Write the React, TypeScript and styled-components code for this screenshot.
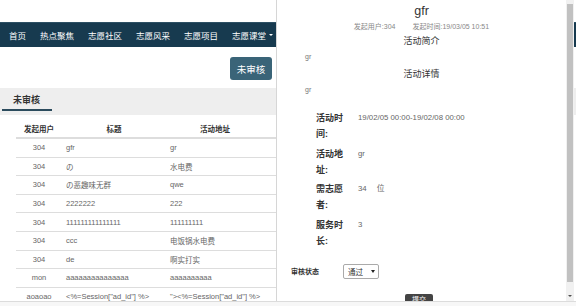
import React from 'react';
import styled, { createGlobalStyle } from 'styled-components';

const GlobalStyle = createGlobalStyle`
  html, body {
    margin: 0;
    padding: 0;
    background: #fff;
    overflow: hidden;
    font-family: 'Liberation Sans', 'Noto Sans CJK SC', sans-serif;
  }
`;

interface Row {
  user: string;
  title: string;
  address: string;
}

const rows: Row[] = [
  { user: '304', title: 'gfr', address: 'gr' },
  { user: '304', title: 'の', address: '水电费' },
  { user: '304', title: 'の恶趣味无群', address: 'qwe' },
  { user: '304', title: '2222222', address: '222' },
  { user: '304', title: '111111111111111', address: '111111111' },
  { user: '304', title: 'ccc', address: '电饭锅水电费' },
  { user: '304', title: 'de', address: '啊实打实' },
  { user: 'mon', title: 'aaaaaaaaaaaaaaa', address: 'aaaaaaaaaa' },
  { user: 'aoaoao', title: '<%=Session["ad_id"] %>', address: '"><%=Session["ad_id"] %>' },
];

const navItems = ['首页', '热点聚焦', '志愿社区', '志愿风采', '志愿项目'];

const details = [
  { label: '活动时间:', value: '19/02/05 00:00-19/02/08 00:00' },
  { label: '活动地址:', value: 'gr' },
  { label: '需志愿者:', value: '34', unit: '位' },
  { label: '服务时长:', value: '3' },
];

const App: React.FC = () => {
  return (
    <>
      <GlobalStyle />
      <Page>
        <NavBar>
          {navItems.map((item) => (
            <NavItem key={item}>{item}</NavItem>
          ))}
          <NavItem>
            志愿课堂 <Caret />
          </NavItem>
        </NavBar>

        <ActionRow>
          <PrimaryButton>未审核</PrimaryButton>
        </ActionRow>

        <TabBand>
          <Tab>未审核</Tab>
        </TabBand>

        <Table>
          <thead>
            <tr>
              <Th width={46}>发起用户</Th>
              <Th width={104}>标题</Th>
              <Th width={80}>活动地址</Th>
              <Th width={80}></Th>
            </tr>
          </thead>
          <tbody>
            {rows.map((row, i) => (
              <tr key={i}>
                <Td align="center">{row.user}</Td>
                <Td>{row.title}</Td>
                <Td>{row.address}</Td>
                <Td />
              </tr>
            ))}
          </tbody>
        </Table>
      </Page>

      <Modal>
        <ModalBody>
          <Title>gfr</Title>
          <Meta>
            <span>发起用户:304</span>
            <span>发起时间:19/03/05 10:51</span>
          </Meta>
          <SectionTitle>活动简介</SectionTitle>
          <SectionText>gr</SectionText>
          <SectionTitle>活动详情</SectionTitle>
          <SectionText>gr</SectionText>

          <DetailList>
            {details.map((d) => (
              <DetailRow key={d.label}>
                <DetailLabel>{d.label}</DetailLabel>
                <DetailValue>
                  {d.value}
                  {d.unit && <Unit>{d.unit}</Unit>}
                </DetailValue>
              </DetailRow>
            ))}
          </DetailList>

          <StatusRow>
            <StatusLabel>审核状态</StatusLabel>
            <Select>
              <span>通过</span>
              <SelectArrow />
            </Select>
          </StatusRow>

          <SubmitRow>
            <SubmitButton>提交</SubmitButton>
          </SubmitRow>
        </ModalBody>

        <ScrollTrack>
          <ScrollThumb />
          <ScrollArrow />
        </ScrollTrack>
      </Modal>

      <BottomEdge />
    </>
  );
};

const Page = styled.div`
  width: 576px;
  height: 306px;
  padding-top: 22px;
  box-sizing: border-box;
`;

const NavBar = styled.div`
  height: 25px;
  background-color: #173a4f;
  border-top: 1px solid #2d5064;
  box-sizing: border-box;
  display: flex;
  align-items: center;
  padding-left: 2px;
`;

const NavItem = styled.div`
  padding: 0 7px;
  color: #fff;
  font-size: 8.5px;
  display: flex;
  align-items: center;
  gap: 3px;
`;

const Caret = styled.span`
  width: 0;
  height: 0;
  border-left: 2px solid transparent;
  border-right: 2px solid transparent;
  border-top: 2px solid #fff;
`;

const ActionRow = styled.div`
  width: 276px;
  display: flex;
  justify-content: flex-end;
  padding: 10px 4px 0 0;
  box-sizing: border-box;
`;

const PrimaryButton = styled.div`
  width: 42px;
  height: 23px;
  border-radius: 3px;
  background-color: #3a6478;
  color: #fff;
  font-size: 9.5px;
  display: flex;
  align-items: center;
  justify-content: center;
`;

const TabBand = styled.div`
  margin-top: 8px;
  height: 27px;
  background-color: #eeeeee;
  padding-left: 2px;
`;

const Tab = styled.div`
  display: inline-block;
  width: 50px;
  box-sizing: border-box;
  padding: 6px 0 2px 11px;
  line-height: 13px;
  font-size: 9px;
  font-weight: bold;
  color: #333;
  border-bottom: 2px solid #2b4b5d;
`;

const Table = styled.table`
  margin: 5px 0 0 16px;
  border-collapse: collapse;
  table-layout: fixed;
  font-size: 7.5px;
`;

const Th = styled.th<{ width: number }>`
  box-sizing: border-box;
  width: ${(props) => props.width}px;
  height: 18px;
  padding: 0 4px;
  text-align: center;
  color: #333;
  font-weight: bold;
  border-bottom: 2px solid #ddd;
`;

const Td = styled.td<{ align?: 'left' | 'center' }>`
  height: 17.6px;
  padding: 0 4px;
  text-align: ${(props) => props.align || 'left'};
  color: #666;
  border-top: 1px solid #ddd;
  white-space: nowrap;
`;

const Modal = styled.div`
  position: fixed;
  left: 276px;
  top: 0;
  width: 298px;
  height: 302px;
  background-color: #fff;
  border-left: 1px solid #d6d6d6;
  box-sizing: border-box;
  display: flex;
  overflow: hidden;
`;

const ModalBody = styled.div`
  flex: 1;
  display: flex;
  flex-direction: column;
  color: #333;
`;

const Title = styled.div`
  margin-top: 3px;
  text-align: center;
  font-size: 12.5px;
  line-height: 16px;
`;

const Meta = styled.div`
  margin-top: 3px;
  display: flex;
  justify-content: center;
  gap: 17px;
  font-size: 7px;
  line-height: 9px;
  color: #888;
`;

const SectionTitle = styled.div`
  margin-top: 4px;
  text-align: center;
  font-size: 9px;
  line-height: 13px;
`;

const SectionText = styled.div`
  padding-left: 28px;
  margin-top: 2px;
  font-size: 7px;
  line-height: 14px;
  color: #777;
`;

const DetailList = styled.div`
  margin-top: 13px;
  padding-left: 39px;
  display: flex;
  flex-direction: column;
  gap: 3.5px;
`;

const DetailRow = styled.div`
  display: flex;
  align-items: flex-start;
`;

const DetailLabel = styled.div`
  width: 30px;
  font-size: 9px;
  line-height: 16px;
  font-weight: bold;
  color: #333;
`;

const DetailValue = styled.div`
  margin-left: 12px;
  font-size: 7.8px;
  line-height: 16px;
  color: #666;
`;

const Unit = styled.span`
  margin-left: 10px;
`;

const StatusRow = styled.div`
  margin-top: 15px;
  padding-left: 14px;
  display: flex;
  align-items: center;
`;

const StatusLabel = styled.div`
  width: 52px;
  font-size: 7px;
  font-weight: bold;
  color: #333;
`;

const Select = styled.div`
  width: 36px;
  height: 15px;
  box-sizing: border-box;
  border: 1px solid #aaa;
  border-radius: 2px;
  padding: 0 3px 0 4px;
  display: flex;
  align-items: center;
  justify-content: space-between;
  font-size: 7.5px;
  color: #333;
`;

const SelectArrow = styled.span`
  width: 0;
  height: 0;
  border-left: 2px solid transparent;
  border-right: 2px solid transparent;
  border-top: 3px solid #222;
`;

const SubmitRow = styled.div`
  margin-top: 15px;
  display: flex;
  padding-left: 128px;
`;

const SubmitButton = styled.div`
  width: 28px;
  height: 14px;
  background-color: #444;
  border-radius: 2px 2px 0 0;
  color: #fff;
  font-size: 7px;
  text-align: center;
  line-height: 11px;
`;

const ScrollTrack = styled.div`
  width: 8px;
  background-color: #f1f1f1;
  display: flex;
  flex-direction: column;
  align-items: center;
  padding-top: 4px;
  box-sizing: border-box;
`;

const ScrollThumb = styled.div`
  width: 6px;
  height: 278px;
  background-color: #c1c1c1;
`;

const ScrollArrow = styled.span`
  margin-top: 13px;
  width: 0;
  height: 0;
  border-left: 2px solid transparent;
  border-right: 2px solid transparent;
  border-top: 2px solid #505050;
`;

const BottomEdge = styled.div`
  position: fixed;
  left: 0;
  right: 0;
  bottom: 0;
  height: 4px;
  border-top: 1px solid #dcdcdc;
  background-color: #f7f7f7;
`;

export default App;
